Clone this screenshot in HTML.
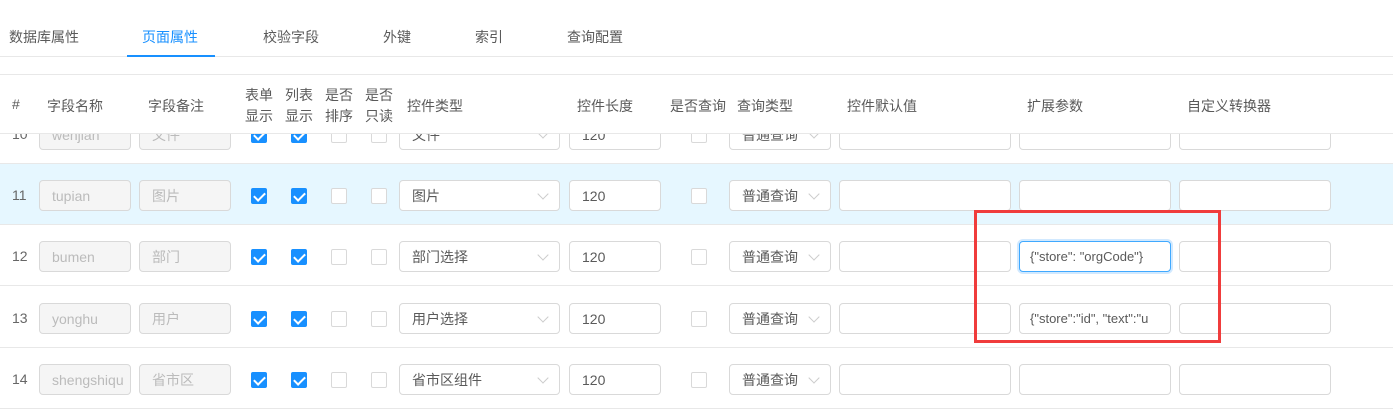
<!DOCTYPE html>
<html><head><meta charset="utf-8"><style>
*{box-sizing:border-box;margin:0;padding:0}
body{width:1393px;height:405px;overflow:hidden;background:#fff;font-family:"Liberation Sans","Noto Sans CJK SC",sans-serif;font-size:14px;color:#5a5a5a;position:relative}
.a{position:absolute}
.tab{position:absolute;top:27px;font-size:14px;color:#5a5a5a}
.row{position:absolute;left:0;width:1393px;height:61px;border-bottom:1px solid #e8e8e8}
.num{position:absolute;left:12px;top:23px;color:#666}
.in{position:absolute;top:16px;height:31px;border:1px solid #d9d9d9;border-radius:4px;background:#fff;padding-left:12px;line-height:30px;color:#5a5a5a;white-space:nowrap;overflow:hidden}
.dis{background:#f5f5f5;color:#bbb}
.cb{position:absolute;top:24px;width:16px;height:16px;border:1px solid #d9d9d9;border-radius:2px;background:#fff}
.ck{background:#1890ff;border-color:#1890ff}
.ck:after{content:"";position:absolute;left:4px;top:1px;width:5px;height:9px;border:solid #fff;border-width:0 2px 2px 0;transform:rotate(45deg)}
.sel:after{content:"";position:absolute;right:12px;top:9px;width:7px;height:7px;border:solid #ccc;border-width:0 1px 1px 0;transform:rotate(45deg)}
.h{position:absolute;color:#5a5a5a;font-size:14px}
</style></head><body>
<div class="tab" style="left:9px">数据库属性</div>
<div class="tab" style="left:142px;color:#1890ff">页面属性</div>
<div class="tab" style="left:263px">校验字段</div>
<div class="tab" style="left:383px">外键</div>
<div class="tab" style="left:475px">索引</div>
<div class="tab" style="left:567px">查询配置</div>
<div class="a" style="left:0;top:56px;width:1393px;height:1px;background:#e8e8e8"></div>
<div class="a" style="left:127px;top:55px;width:88px;height:2px;background:#1890ff"></div>

<div class="row" style="top:103px">
<div class="num">10</div>
<div class="in dis" style="left:39px;width:92px">wenjian</div>
<div class="in dis" style="left:139px;width:92px">文件</div>
<div class="cb ck" style="left:251px"></div><div class="cb ck" style="left:291px"></div><div class="cb" style="left:331px"></div><div class="cb" style="left:371px"></div>
<div class="in sel" style="left:399px;width:161px">文件</div>
<div class="in" style="left:569px;width:92px">120</div>
<div class="cb" style="left:691px"></div>
<div class="in sel" style="left:729px;width:102px">普通查询</div>
<div class="in" style="left:839px;width:172px"></div>
<div class="in" style="left:1019px;width:152px"></div>
<div class="in" style="left:1179px;width:152px"></div>
</div>
<div class="a" style="left:0;top:74px;width:1393px;height:60px;background:#fff;border-top:1px solid #e8e8e8;border-bottom:1px solid #e8e8e8"></div>
<div class="h" style="left:12px;top:96px">#</div>
<div class="h" style="left:47px;top:96px">字段名称</div>
<div class="h" style="left:148px;top:96px">字段备注</div>
<div class="h" style="left:245px;top:85px;line-height:21px">表单<br>显示</div>
<div class="h" style="left:285px;top:85px;line-height:21px">列表<br>显示</div>
<div class="h" style="left:325px;top:85px;line-height:21px">是否<br>排序</div>
<div class="h" style="left:365px;top:85px;line-height:21px">是否<br>只读</div>
<div class="h" style="left:407px;top:96px">控件类型</div>
<div class="h" style="left:577px;top:96px">控件长度</div>
<div class="h" style="left:670px;top:96px">是否查询</div>
<div class="h" style="left:737px;top:96px">查询类型</div>
<div class="h" style="left:847px;top:96px">控件默认值</div>
<div class="h" style="left:1027px;top:96px">扩展参数</div>
<div class="h" style="left:1187px;top:96px">自定义转换器</div>

<div class="row" style="top:164px;background:#e6f7ff">
<div class="num">11</div>
<div class="in dis" style="left:39px;width:92px">tupian</div>
<div class="in dis" style="left:139px;width:92px">图片</div>
<div class="cb ck" style="left:251px"></div><div class="cb ck" style="left:291px"></div><div class="cb" style="left:331px"></div><div class="cb" style="left:371px"></div>
<div class="in sel" style="left:399px;width:161px">图片</div>
<div class="in" style="left:569px;width:92px">120</div>
<div class="cb" style="left:691px"></div>
<div class="in sel" style="left:729px;width:102px">普通查询</div>
<div class="in" style="left:839px;width:172px"></div>
<div class="in" style="left:1019px;width:152px"></div>
<div class="in" style="left:1179px;width:152px"></div>
</div>
<div class="row" style="top:225px">
<div class="num">12</div>
<div class="in dis" style="left:39px;width:92px">bumen</div>
<div class="in dis" style="left:139px;width:92px">部门</div>
<div class="cb ck" style="left:251px"></div><div class="cb ck" style="left:291px"></div><div class="cb" style="left:331px"></div><div class="cb" style="left:371px"></div>
<div class="in sel" style="left:399px;width:161px">部门选择</div>
<div class="in" style="left:569px;width:92px">120</div>
<div class="cb" style="left:691px"></div>
<div class="in sel" style="left:729px;width:102px">普通查询</div>
<div class="in" style="left:839px;width:172px"></div>
<div class="in" style="left:1019px;width:152px;border-color:#40a9ff;box-shadow:0 0 0 2px rgba(24,144,255,.2);padding-left:10px;font-size:13px">{"store": "orgCode"}</div>
<div class="in" style="left:1179px;width:152px"></div>
</div>
<div class="row" style="top:287px">
<div class="num">13</div>
<div class="in dis" style="left:39px;width:92px">yonghu</div>
<div class="in dis" style="left:139px;width:92px">用户</div>
<div class="cb ck" style="left:251px"></div><div class="cb ck" style="left:291px"></div><div class="cb" style="left:331px"></div><div class="cb" style="left:371px"></div>
<div class="in sel" style="left:399px;width:161px">用户选择</div>
<div class="in" style="left:569px;width:92px">120</div>
<div class="cb" style="left:691px"></div>
<div class="in sel" style="left:729px;width:102px">普通查询</div>
<div class="in" style="left:839px;width:172px"></div>
<div class="in" style="left:1019px;width:152px;padding-left:10px;font-size:13px">{"store":"id", "text":"u</div>
<div class="in" style="left:1179px;width:152px"></div>
</div>
<div class="row" style="top:348px">
<div class="num">14</div>
<div class="in dis" style="left:39px;width:92px">shengshiqu</div>
<div class="in dis" style="left:139px;width:92px">省市区</div>
<div class="cb ck" style="left:251px"></div><div class="cb ck" style="left:291px"></div><div class="cb" style="left:331px"></div><div class="cb" style="left:371px"></div>
<div class="in sel" style="left:399px;width:161px">省市区组件</div>
<div class="in" style="left:569px;width:92px">120</div>
<div class="cb" style="left:691px"></div>
<div class="in sel" style="left:729px;width:102px">普通查询</div>
<div class="in" style="left:839px;width:172px"></div>
<div class="in" style="left:1019px;width:152px"></div>
<div class="in" style="left:1179px;width:152px"></div>
</div>
<div class="a" style="left:974px;top:210px;width:247px;height:133px;border:3px solid #f03c3c"></div>
</body></html>
